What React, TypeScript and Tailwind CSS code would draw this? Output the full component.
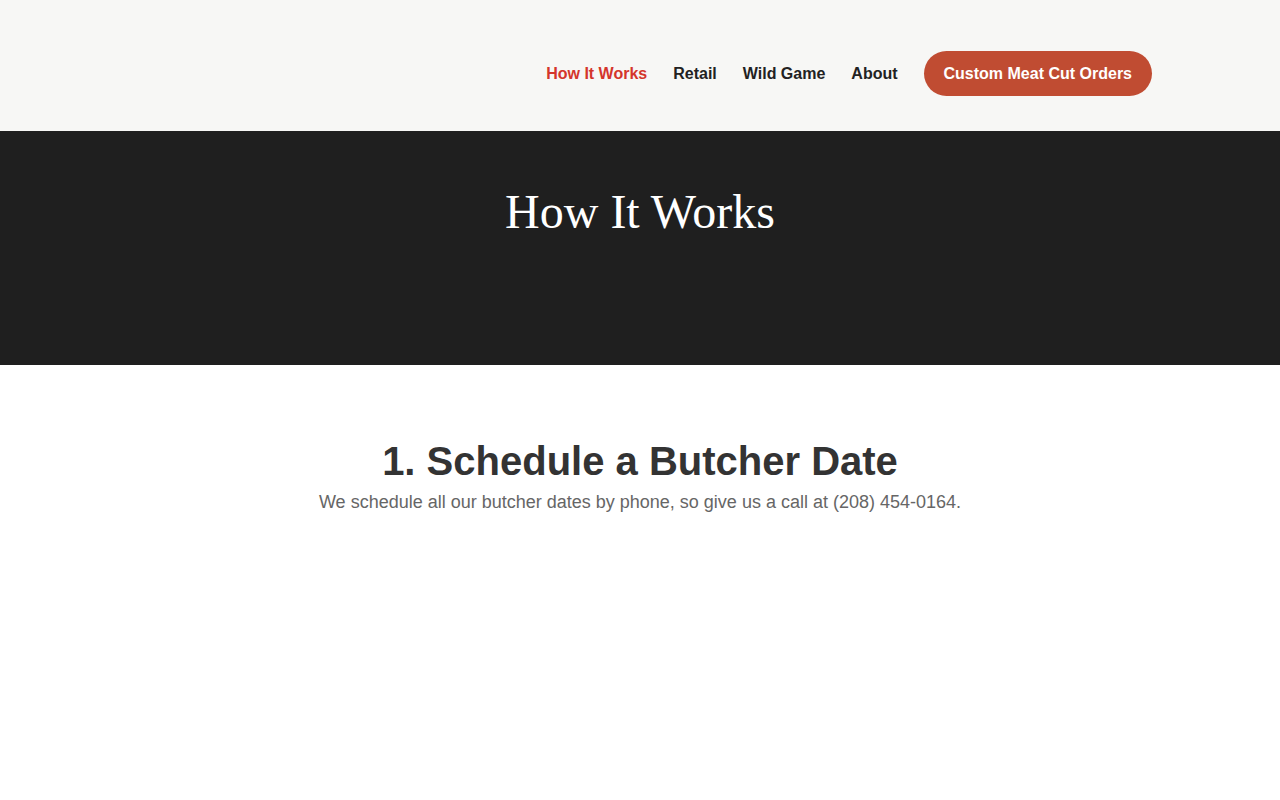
import React from "react";

const links = [
  { label: "How It Works", active: true },
  { label: "Retail", active: false },
  { label: "Wild Game", active: false },
  { label: "About", active: false },
];

export default function App() {
  return (
    <div className="min-h-screen bg-white font-['Liberation_Sans',Arial,sans-serif]">
      {/* Top bar */}
      <header className="h-[131px] bg-[#f7f7f5]">
        <div className="mx-auto flex max-w-[1024px] justify-end pt-[51px]">
          <nav className="flex items-center gap-[26px]">
            {links.map((link) => (
              <a
                key={link.label}
                href="#"
                className={`text-[16px] font-bold ${link.active ? "text-[#d4352b]" : "text-[#222222]"}`}
              >
                {link.label}
              </a>
            ))}
            <a
              href="#"
              className="flex h-[45px] items-center rounded-full bg-[#c04c32] px-5 text-[16px] font-bold text-white"
            >
              Custom Meat Cut Orders
            </a>
          </nav>
        </div>
      </header>

      {/* Page banner */}
      <section className="h-[234px] bg-[#1f1f1f] pt-[52px] text-center">
        <h1 className="font-['Liberation_Serif','Times_New_Roman',serif] text-[48px] leading-[58px] font-normal text-white">
          How It Works
        </h1>
      </section>

      {/* Steps */}
      <section className="pt-[73px] text-center">
        <h2 className="text-[40px] leading-[46px] font-bold text-[#333333]">1. Schedule a Butcher Date</h2>
        <p className="mt-[5px] text-[18px] leading-[27px] text-[#666666]">
          We schedule all our butcher dates by phone, so give us a call at (208) 454-0164.
        </p>
      </section>
    </div>
  );
}
